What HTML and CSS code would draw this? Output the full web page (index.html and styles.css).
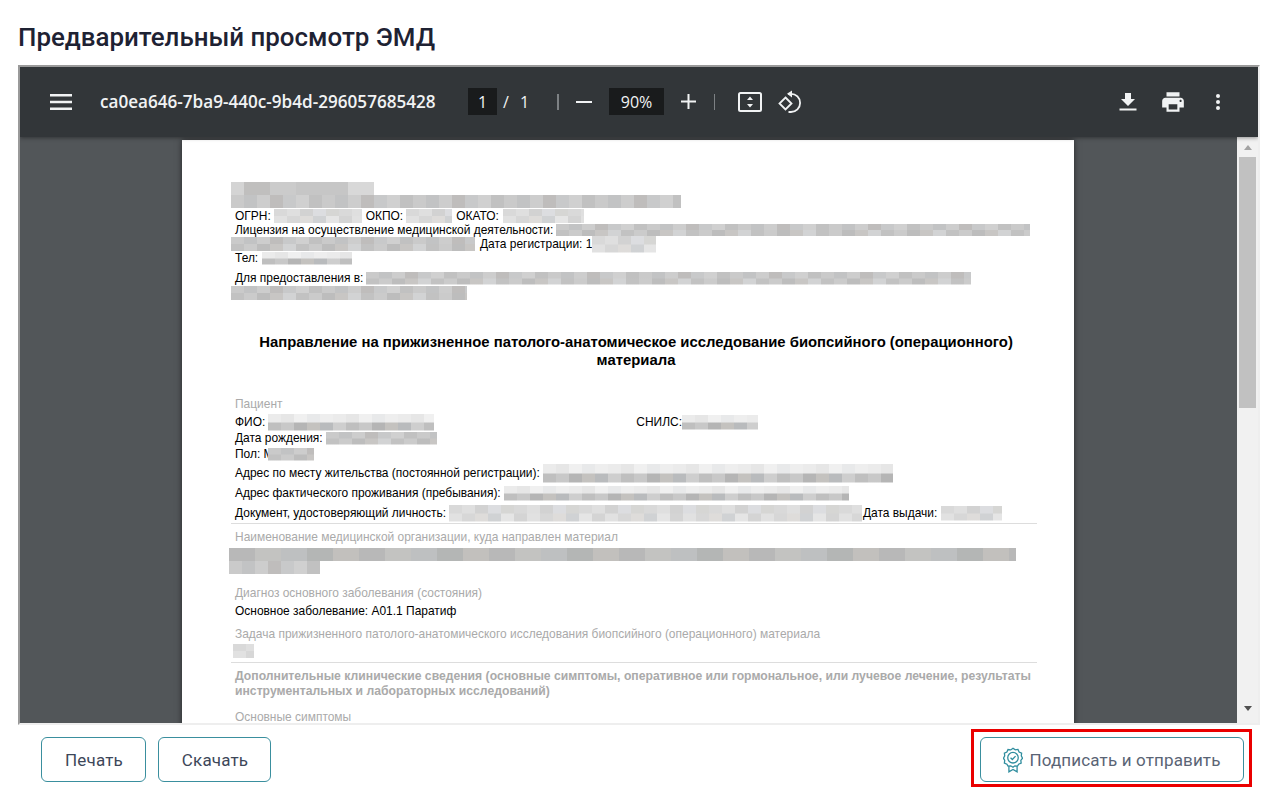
FILE: index.html
```html
<!DOCTYPE html>
<html lang="ru">
<head>
<meta charset="utf-8">
<title>Предварительный просмотр ЭМД</title>
<link rel="stylesheet" href="styles.css">
</head>
<body>
<h1 class="title">Предварительный просмотр ЭМД</h1>
<section class="viewer">
  <header class="toolbar">
    <svg class="ic-menu" width="22" height="16" viewBox="0 0 22 16"><path d="M0 0h22v2.400H0zM0 6.800h22v2.400H0zM0 13.600h22V16H0z" fill="#f1f3f4"/></svg>
    <span class="doc-name">ca0ea646-7ba9-440c-9b4d-296057685428</span>
    <span class="page-box">1</span>
    <span class="page-sep">/</span>
    <span class="page-total">1</span>
    <span class="divider div-a"></span>
    <svg class="ic-minus" width="16" height="2" viewBox="0 0 16 2"><path d="M0 0h16v2H0z" fill="#f1f3f4"/></svg>
    <span class="zoom-box">90%</span>
    <svg class="ic-plus" width="15" height="15" viewBox="0 0 15 15"><path d="M6.500 0h2v6.500H15v2H8.500V15h-2V8.500H0v-2h6.500z" fill="#f1f3f4"/></svg>
    <span class="divider div-b"></span>
    <svg class="ic-fit" width="24" height="20" viewBox="0 0 24 20"><rect x="1" y="1" width="22" height="18" rx="1.500" fill="none" stroke="#f1f3f4" stroke-width="2"/><path d="M12 4.500l3 3.500H9zM12 15.500L9 12h6z" fill="#f1f3f4"/></svg>
    <svg class="ic-rotate" width="24" height="24" viewBox="0 0 24 24"><path d="M8.500 7.500L14.500 13.500 8.500 19.500 2.500 13.500z" fill="none" stroke="#f1f3f4" stroke-width="1.800"/><path d="M11 3.800h3a9 9 0 0 1 0 18.200h-2.500" fill="none" stroke="#f1f3f4" stroke-width="1.800"/><path d="M15 .5v7L10 3.800z" fill="#f1f3f4"/></svg>
    <span class="tool-right">
      <svg class="ic-down" width="24" height="24" viewBox="0 0 24 24"><path d="M19 9h-4V3H9v6H5l7 7 7-7zM3.500 18.500v2h17v-2z" fill="#f1f3f4"/></svg>
      <svg class="ic-print" width="26" height="26" viewBox="0 0 24 24"><path d="M19 8H5c-1.660 0-3 1.340-3 3v6h4v4h12v-4h4v-6c0-1.660-1.340-3-3-3zm-3 11H8v-5h8v5zm3-7c-.550 0-1-.450-1-1s.450-1 1-1 1 .450 1 1-.450 1-1 1zm-1-9H6v4h12V3z" fill="#f1f3f4"/></svg>
      <svg class="ic-dots" width="6" height="18" viewBox="0 0 6 18"><circle cx="3" cy="3" r="2" fill="#f1f3f4"/><circle cx="3" cy="9" r="2" fill="#f1f3f4"/><circle cx="3" cy="15" r="2" fill="#f1f3f4"/></svg>
    </span>
  </header>
  <div class="doc-area">
    <main class="doc-scroll">
      <article class="page">
        <span class="mz single soft row-block" style="width:143px;height:13px"></span>
        <span class="mz single mid row-block" style="width:450px;height:13px"></span>
        <div class="row mt1">ОГРН:<i class="mz light" style="width:88px;height:14px;margin-left:3px"></i><span class="sp4">ОКПО:</span><i class="mz light" style="width:46px;height:14px;margin-left:3px"></i><span class="sp4">ОКАТО:</span><i class="mz light" style="width:81px;height:14px;margin-left:4px"></i></div>
        <div class="row">Лицензия на осуществление медицинской деятельности:<i class="mz mid" style="width:474px;height:12px;margin-left:3px"></i></div>
        <div class="row"><i class="mz mid outdent" style="width:244px;height:14px"></i><span class="sp5">Дата регистрации: 1</span><i class="mz light" style="width:64px;height:17px"></i></div>
        <div class="row">Тел:<i class="mz fade" style="width:90px;height:13px;margin-left:4px"></i></div>
        <div class="row mt6">Для предоставления в:<i class="mz mid" style="width:605px;height:13px;margin-left:3px"></i></div>
        <div class="row mt1"><i class="mz mid outdent" style="width:236px;height:14px"></i></div>
        <h2 class="doc-title">Направление на прижизненное патолого-анатомическое исследование биопсийного (операционного) материала</h2>
        <div class="row label mt28">Пациент</div>
        <div class="row mt4">ФИО:<i class="mz fade" style="width:166px;height:17px;margin-left:3px"></i><span class="snils">СНИЛС:</span><i class="mz fade" style="width:76px;height:15px"></i></div>
        <div class="row mt2">Дата рождения:<i class="mz mid" style="width:111px;height:13px;margin-left:3px"></i></div>
        <div class="row mt2">Пол: М<i class="mz mid over" style="width:46px;height:13px"></i></div>
        <div class="row mt5">Адрес по месту жительства (постоянной регистрации):<i class="mz fade" style="width:350px;height:19px;margin-left:3px"></i></div>
        <div class="row mt6">Адрес фактического проживания (пребывания):<i class="mz fade" style="width:345px;height:15px;margin-left:3px"></i></div>
        <div class="row mt6">Документ, удостоверяющий личность:<i class="mz light" style="width:413px;height:17px;margin-left:3px"></i><span class="sp1">Дата выдачи:</span><i class="mz light" style="width:61px;height:15px;margin-left:4px"></i></div>
        <hr class="rule rule-a">
        <div class="row label mt6">Наименование медицинской организации, куда направлен материал</div>
        <span class="mz single dark row-block top4 out6" style="width:787px;height:13px"></span>
        <span class="mz single mid row-block out6" style="width:91px;height:13px"></span>
        <div class="row label mt12">Диагноз основного заболевания (состояния)</div>
        <div class="row mt4">Основное заболевание: А01.1 Паратиф</div>
        <div class="row label mt9">Задача прижизненного патолого-анатомического исследования биопсийного (операционного) материала</div>
        <span class="mz light row-block top3 out2" style="width:21px;height:14px"></span>
        <hr class="rule rule-b">
        <div class="row label strong mt6">Дополнительные клинические сведения (основные симптомы, оперативное или гормональное, или лучевое лечение, результаты</div>
        <div class="row label strong mt1">инструментальных и лабораторных исследований)</div>
        <div class="row label mt12">Основные симптомы</div>
      </article>
    </main>
    <aside class="scrollbar">
      <span class="arrow-up"></span>
      <span class="thumb"></span>
      <span class="arrow-down"></span>
    </aside>
  </div>
</section>
<footer class="footer">
  <button class="btn btn-print">Печать</button>
  <button class="btn btn-save">Скачать</button>
  <button class="btn btn-sign">
    <svg width="20" height="26" viewBox="0 0 22 28" fill="none" stroke="#2f8d9e" stroke-width="1.400"><path d="M11 1l2.500 1.800 3-.4 1.200 2.800 2.800 1.200-.4 3L21.500 12l-1.900 2.500.4 3-2.800 1.200-1.200 2.100-3-.4L11 22l-2.500-1.600-3 .4-1.200-2.100L1.500 17.500l.4-3L.5 12l1.400-2.500-.4-3 2.800-1.200 1.200-2.800 3 .4z"/><circle cx="11" cy="11.500" r="5.800"/><path d="M8.300 11.500l2 2 3.500-3.700"/><path d="M6.500 21v6l4.500-2.500 4.500 2.500v-6"/></svg>
    <span>Подписать и отправить</span>
  </button>
</footer>
</body>
</html>
```
FILE: styles.css
```css
:root {
  --soft: repeating-linear-gradient(90deg, #d4d4d4 0 13px, #c0bfbe 13px 39px, #cbcbcb 39px 65px, #c6c6c6 65px 117px, #d8d8d8 117px 143px);
  --mid-top: repeating-linear-gradient(90deg, #cacaca 0 13px, #c2c3c4 13px 26px, #cdcdcd 26px 39px, #bfbdbc 39px 52px, #c8c9ca 52px 65px, #d0d0d0 65px 78px, #c1c1c1 78px 91px);
  --mid-bot: repeating-linear-gradient(90deg, #c2c2c2 0 13px, #cbcbcb 13px 26px, #bdbdbd 26px 39px, #c8c6c4 39px 52px, #d2d3d4 52px 65px);
  --light-top: repeating-linear-gradient(90deg, #d9d9d9 0 13px, #dfdfdf 13px 26px, #d2d2d2 26px 39px, #dcdde0 39px 52px, #d6d6d4 52px 65px);
  --light-bot: repeating-linear-gradient(90deg, #e1e1e1 0 13px, #d7d7d7 13px 26px, #dedcda 26px 39px, #d0d2d4 39px 52px, #e5e5e5 52px 65px, #d4d4d4 65px 78px);
  --fade-top: repeating-linear-gradient(90deg, #ebebeb 0 13px, #e6e6e6 13px 26px, #f0f0f0 26px 39px, #e8e9ea 39px 52px, #eeeeee 52px 65px);
  --fade-bot: repeating-linear-gradient(90deg, #bfbfbf 0 13px, #c8c8c8 13px 26px, #b5b5b5 26px 39px, #c4c2bf 39px 52px, #b9bbbd 52px 65px, #cecece 65px 78px);
  --dark: repeating-linear-gradient(90deg, #b8b8b8 0 26px, #c3c3c1 26px 52px, #bec0c1 52px 78px, #b4b6b5 78px 104px, #c2c0bd 104px 130px);
}

* { box-sizing: border-box; }

html, body {
  margin: 0;
  height: 788px;
  overflow: hidden;
  background: #fff;
}

body {
  display: flex;
  flex-direction: column;
  font-family: "Roboto", "Liberation Sans", sans-serif;
  padding-top: 22px;
}

.title {
  margin: 0 0 0 18px;
  height: 43px;
  font-size: 25.900px;
  line-height: 30px;
  font-weight: 500;
  color: #1e2233;
}

/* viewer frame */
.viewer {
  margin-left: 18px;
  width: 1242px;
  height: 660px;
  display: flex;
  flex-direction: column;
  border-style: solid;
  border-width: 2px;
  border-color: #9a9a9a #eeeeee #eeeeee #9a9a9a;
  overflow: hidden;
}

.toolbar {
  position: relative;
  z-index: 2;
  flex: none;
  height: 70px;
  display: flex;
  align-items: center;
  padding-left: 30px;
  padding-bottom: 1px;
  background: #323639;
  box-shadow: 0 1px 4px rgba(0,0,0,.4);
  color: #f1f3f4;
  font-family: "Open Sans", "Noto Sans", sans-serif;
}

.doc-name {
  margin-left: 28px;
  width: 368px;
  font-size: 17.130px;
  font-weight: 600;
  white-space: nowrap;
}

.page-box, .zoom-box {
  display: flex;
  align-items: center;
  justify-content: center;
  height: 27px;
  background: #191b1c;
  font-size: 16px;
}

.page-box { width: 29px; }
.page-sep { margin-left: 6px; font-size: 16px; width: 7px; }
.page-total { margin-left: 10px; font-size: 16px; width: 9px; }

.divider { width: 1px; height: 16px; background: #7d8184; }
.div-a { margin-left: 28px; width: 2px; }
.div-b { margin-left: 18px; }

.ic-minus { margin-left: 17px; }
.zoom-box { margin-left: 17px; width: 55px; }
.ic-plus { margin-left: 17px; }
.ic-fit { margin-left: 23px; }
.ic-rotate { margin-left: 15px; }

.tool-right {
  margin-left: auto;
  display: flex;
  align-items: center;
  padding-right: 37px;
}
.ic-print { margin-left: 20px; }
.ic-dots { margin-left: 29px; }

/* document area */
.doc-area {
  flex: 1;
  min-height: 0;
  display: flex;
}

.doc-scroll {
  flex: 1;
  min-width: 0;
  background: #525659;
  display: flex;
  justify-content: center;
  padding-top: 3px;
  overflow: hidden;
  padding-right: 1px;
}

.scrollbar {
  flex: none;
  width: 21px;
  background: #f1f1f1;
  display: flex;
  flex-direction: column;
  align-items: center;
}

.arrow-up, .arrow-down {
  width: 0;
  height: 0;
  border-left: 4.500px solid transparent;
  border-right: 4.500px solid transparent;
}
.arrow-up { border-bottom: 5px solid #a3a3a3; margin-top: 8px; }
.arrow-down { border-top: 5px solid #505050; margin-top: 298px; }
.thumb { width: 17px; height: 251px; margin-top: 7px; background: #c1c1c1; }

/* document page */
.page {
  flex: none;
  width: 892px;
  height: 1200px;
  padding: 42px 37px 0 53px;
  background: #fff;
  box-shadow: 0 0 6px rgba(0,0,0,.55);
  font-family: "Liberation Sans", Arial, sans-serif;
  font-size: 11.960px;
  color: #000;
}

.row {
  display: flex;
  align-items: center;
  height: 14px;
  line-height: 14px;
  white-space: pre;
}

.mz {
  flex: none;
  display: inline-block;
  background-repeat: no-repeat;
  background-size: 100% 50%;
  background-position: 0 0, 0 100%;
}

.row-block { display: block; margin-left: -4px; }
.outdent { margin-left: -4px; }
.out2 { margin-left: -2px; }
.out6 { margin-left: -6px; }
.over { margin-left: -6px; }
.top3 { margin-top: 3px; }
.top4 { margin-top: 4px; }

.mt1 { margin-top: 1px; }
.mt2 { margin-top: 2px; }
.mt4 { margin-top: 4px; }
.mt5 { margin-top: 5px; }
.mt6 { margin-top: 6px; }
.mt9 { margin-top: 9px; }
.mt12 { margin-top: 12px; }
.mt28 { margin-top: 28px; }

.sp1 { margin-left: 1px; }
.sp4 { margin-left: 4px; }
.sp5 { margin-left: 5px; }
.snils { margin-left: 202px; }

.label { color: #aaaaaa; }
.strong { font-weight: 700; font-size: 12.200px; }

.doc-title {
  margin: 33px 0 0 0;
  font-size: 14.860px;
  font-weight: 700;
  line-height: 18px;
  text-align: center;
}

.rule { margin: 0; border: 0; height: 1px; background: #dddddd; }
.rule-a { margin-top: 3px; margin-left: -4px; }
.rule-b { margin-top: 4px; margin-left: -4px; }

.mid { background-image: var(--mid-top), var(--mid-bot); }
.light { background-image: var(--light-top), var(--light-bot); }
.fade { background-image: var(--fade-top), var(--fade-bot); }
.single.mid { background-image: var(--mid-top), var(--mid-bot); background-size: 100% 100%, 0 0; }
.single.soft { background-image: var(--soft); background-size: 100% 100%; }
.single.dark { background-image: var(--dark); background-size: 100% 100%; }

/* footer */
.footer {
  flex: none;
  display: flex;
  align-items: flex-start;
  padding: 12px 17px 0 41px;
  gap: 12px;
}

.btn {
  position: relative;
  height: 45px;
  padding: 0;
  border: 1px solid #3a8f9e;
  border-radius: 6px;
  background: #fff;
  color: #3d4759;
  font-family: "Roboto", "Liberation Sans", sans-serif;
  font-size: 17px;
  letter-spacing: .15px;
}

.btn-print { width: 105px; padding-left: 1px; }
.btn-save { width: 113px; padding-left: 1px; }

.btn-sign {
  margin-left: auto;
  width: 264px;
  display: flex;
  align-items: center;
  justify-content: center;
  gap: 6px;
  color: #5a6475;
}

.btn-sign::after {
  content: "";
  position: absolute;
  inset: -9px -9px -6px -10px;
  border: 3px solid #ea0000;
}
```
